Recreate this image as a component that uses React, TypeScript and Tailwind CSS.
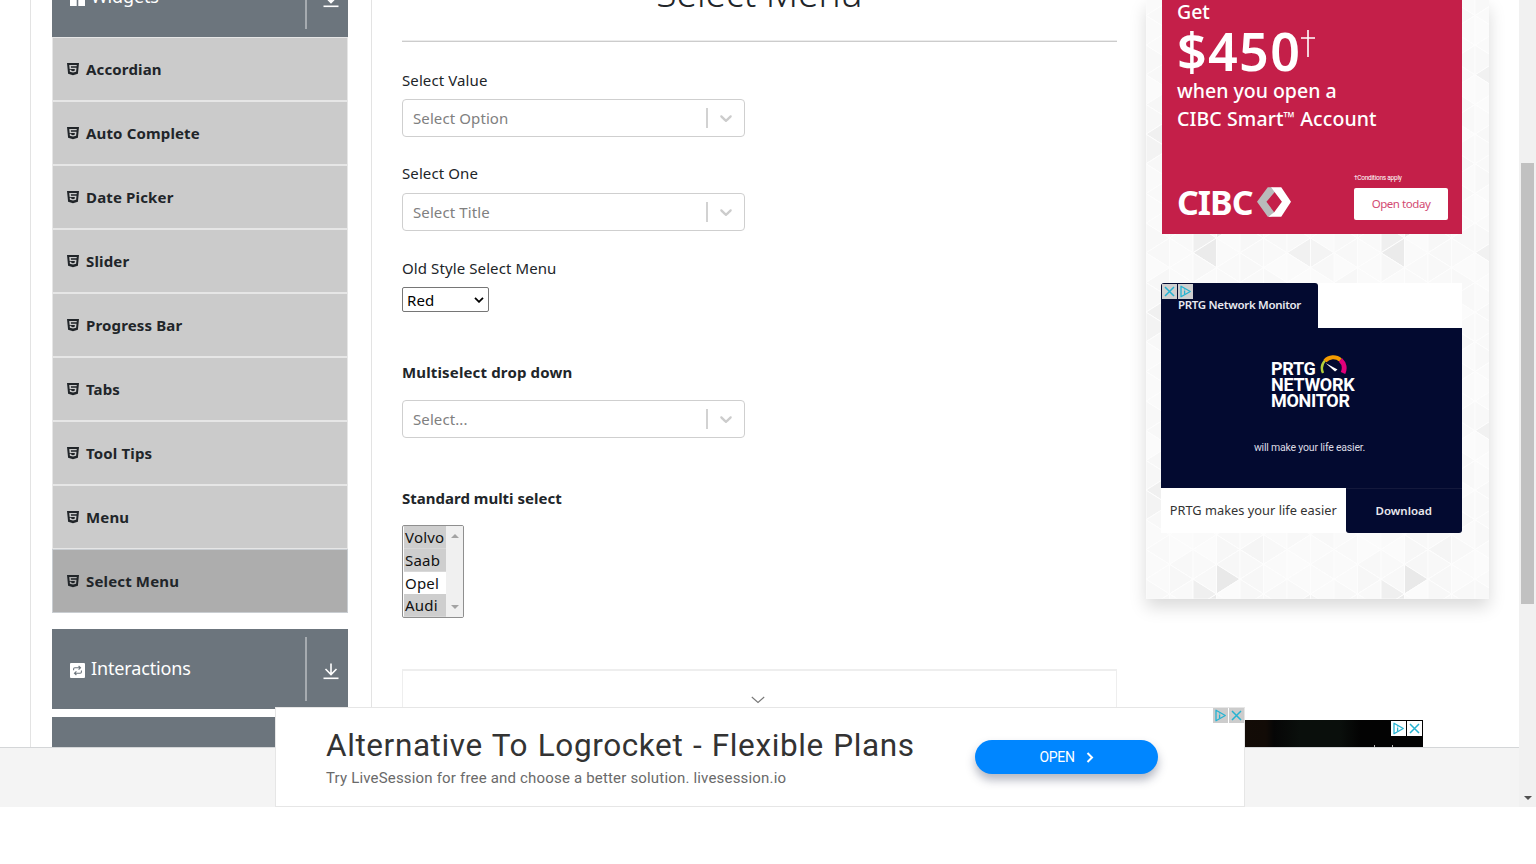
import { FaHtml5 } from "react-icons/fa";

const widgets = [
  "Accordian",
  "Auto Complete",
  "Date Picker",
  "Slider",
  "Progress Bar",
  "Tabs",
  "Tool Tips",
  "Menu",
  "Select Menu",
];

function DownloadIcon() {
  return (
    <svg width="16" height="17" viewBox="0 0 16 17" fill="none" stroke="#fff" strokeWidth="1.6">
      <path d="M8 0.5V11.5M2.5 6l5.5 5.5 5.5-5.5" />
      <path d="M0.5 15.3H15.5" />
    </svg>
  );
}

function GroupHeader({ label, icon }: { label: string; icon: React.ReactNode }) {
  return (
    <div className="flex h-20 w-[296px] shrink-0 bg-[#6c757d] text-white">
      <div className="flex flex-1 items-center gap-[6px] pl-[18px]">
        <span className="mt-[3px] flex">{icon}</span>
        <span className="-mt-[2px] text-[18px] leading-6 tracking-[-0.15px]">{label}</span>
      </div>
      <div className="my-2 w-[2px] bg-[#a6abb0]" />
      <div className="flex w-[41px] items-center justify-center pl-[7px] pt-[5px]">
        <DownloadIcon />
      </div>
    </div>
  );
}

function Sidebar() {
  return (
    <aside className="flex h-full w-[342px] shrink-0 flex-col border-x border-[#e3e3e3] pl-[21px]">
      <div className="-mt-[43px] flex flex-col">
        <GroupHeader
          label="Widgets"
          icon={
            <svg width="15" height="15" viewBox="0 0 15 15" fill="#fff">
              <path d="M0 0h6.7v6.7H0zM8.3 0H15v6.7H8.3zM0 8.3h6.7V15H0zM8.3 8.3H15V15H8.3z" />
            </svg>
          }
        />
        <ul className="w-[296px]">
          {widgets.map((name) => (
            <li
              key={name}
              className={
                name === "Select Menu"
                  ? "flex h-16 items-center gap-[7px] border border-[#c9cdd1] bg-[#adadad] pl-[14px]"
                  : "flex h-16 items-center gap-[7px] border border-[#e6e6e6] bg-[#cbcbcb] pl-[14px]"
              }
            >
              <FaHtml5 className="h-[14px] w-[12px] text-[#212529]" preserveAspectRatio="none" />
              <span className="text-[15px] font-bold leading-6 tracking-[0.15px] text-[#212529]">{name}</span>
            </li>
          ))}
        </ul>
        <div className="mt-4">
          <GroupHeader
            label="Interactions"
            icon={
              <svg width="15" height="15" viewBox="0 0 15 15" fill="none">
                <rect width="15" height="15" rx="1" fill="#fff" />
                <path d="M3.6 7.2V6q0-1.2 1.2-1.2h5M8.6 3l1.9 1.8-1.9 1.8M11.4 7.6V9q0 1.2-1.2 1.2h-5M6.4 8.4l-1.9 1.8 1.9 1.8" stroke="#6c757d" strokeWidth="1.1" />
              </svg>
            }
          />
        </div>
        <div className="mt-2 h-20 w-[296px] bg-[#6c757d]" />
      </div>
    </aside>
  );
}

function SelectBox({ placeholder }: { placeholder: string }) {
  return (
    <div className="flex h-[38px] w-[343px] items-center rounded-[4px] border border-[#cfcfcf] bg-white pl-[10px]">
      <span className="flex-1 text-[15px] leading-6 tracking-[0.1px] text-[#808080]">{placeholder}</span>
      <span className="h-5 w-[2px] bg-[#d2d2d2]" />
      <span className="flex w-[36px] items-center justify-center">
        <svg width="20" height="20" viewBox="0 0 20 20" fill="#cccccc">
          <path d="M4.516 7.548c0.436-0.446 1.043-0.481 1.576 0l3.908 3.747 3.908-3.747c0.533-0.481 1.141-0.446 1.574 0 0.436 0.445 0.408 1.197 0 1.615-0.406 0.418-4.695 4.502-4.695 4.502-0.217 0.223-0.502 0.335-0.787 0.335s-0.57-0.112-0.789-0.335c0 0-4.287-4.084-4.695-4.502s-0.436-1.17 0-1.615z" />
        </svg>
      </span>
    </div>
  );
}

const cars = [
  { name: "Volvo", on: true },
  { name: "Saab", on: true },
  { name: "Opel", on: false },
  { name: "Audi", on: true },
];

function Content() {
  return (
    <section className="ml-[30px] flex w-[715px] shrink-0 flex-col text-[15px] leading-6 tracking-[0.1px] text-[#212529]">
      <h1 className="-mt-[27px] h-10 shrink-0 text-center text-[37px] font-light leading-10 tracking-[0px]">Select Menu</h1>
      <div className="mt-[27px] h-[2px] shrink-0 border-b border-[#cccccc] bg-[#ececec]" />
      <div className="mt-[26px]">Select Value</div>
      <div className="mt-[7px]">
        <SelectBox placeholder="Select Option" />
      </div>
      <div className="mt-[24px]">Select One</div>
      <div className="mt-[8px]">
        <SelectBox placeholder="Select Title" />
      </div>
      <div className="mt-[25px]">Old Style Select Menu</div>
      <div className="mt-[7px] flex h-[25px] w-[87px] shrink-0 items-center justify-between rounded-[2px] border border-[#767676] bg-white pl-1 pr-[4px] text-black">
        <span className="pt-px">Red</span>
        <svg width="10" height="6" viewBox="0 0 10 6" fill="none" stroke="#000" strokeWidth="1.8">
          <path d="M1 0.8l4 4 4-4" />
        </svg>
      </div>
      <div className="mt-[48px] font-bold tracking-[0.15px]">Multiselect drop down</div>
      <div className="mt-[16px]">
        <SelectBox placeholder="Select..." />
      </div>
      <div className="mt-[48px] font-bold tracking-[0px]">Standard multi select</div>
      <div className="mt-[15px] flex h-[93px] w-[62px] shrink-0 overflow-hidden rounded-[2px] border border-[#8f8f8f] bg-white">
        <div className="flex w-[43px] shrink-0 flex-col pl-px">
          {cars.map((c) => (
            <span
              key={c.name}
              className={
                c.on
                  ? "h-[22.75px] shrink-0 border-b border-[#d8d8d8] bg-[#cecece] pl-px leading-[23px] tracking-[0.2px] text-[#101010]"
                  : "h-[22.75px] shrink-0 bg-white pl-px leading-[23px] tracking-[0.2px] text-[#101010]"
              }
            >
              {c.name}
            </span>
          ))}
        </div>
        <div className="flex flex-1 flex-col items-center justify-between bg-[#f0f0f0] py-2">
          <svg width="8" height="4" viewBox="0 0 8 4" fill="#a3a3a3">
            <path d="M0 4l4-4 4 4z" />
          </svg>
          <svg width="8" height="4" viewBox="0 0 8 4" fill="#a3a3a3">
            <path d="M0 0h8l-4 4z" />
          </svg>
        </div>
      </div>
      <div className="mt-[51px] flex h-[120px] shrink-0 justify-center border border-t-2 border-[#eeeeee] pt-[25px] pr-[3px]">
        <svg width="14" height="8" viewBox="0 0 14 8" fill="none" stroke="#777" strokeWidth="1.1">
          <path d="M0.8 1l6.2 5.5L13.2 1" />
        </svg>
      </div>
    </section>
  );
}

const COL = 23.5;
const ROW = 178 / 6;
const shades = ["#f8f8f8", "#fafafa", "#f8f8f8", "#fbfbfb", "#f9f9f9", "#fafafa", "#f7f7f7"];
const dark: Record<string, string> = {
  "2,0,R": "#efefef",
  "2,0,L": "#ebebeb",
  "3,5,R": "#e9e9e9",
  "6,0,L": "#f1f1f1",
  "7,0,R": "#f4f4f4",
  "0,3,R": "#f3f3f3",
  "4,4,L": "#f5f5f5",
  "0,2,L": "#f0f0f0",
};

function triangles() {
  const out: { key: string; d: string; fill: string }[] = [];
  for (let c = 0; c < 8; c++) {
    for (let r = -1; r < 7; r++) {
      const even = c % 2 === 0;
      const x0 = c * COL;
      const x1 = x0 + COL;
      const top = r * ROW;
      const left = even ? top - ROW / 2 : top;
      const right = even ? top : top + ROW / 2;
      const row = (r + 6) % 6;
      const pointRight = c + "," + row + ",R";
      const pointLeft = c + "," + row + ",L";
      out.push({
        key: pointRight + r,
        d: `M${x0} ${left}L${x0} ${left + ROW}L${x1} ${right}Z`,
        fill: dark[pointRight] ?? shades[(c * 5 + row * 3) % 7],
      });
      out.push({
        key: pointLeft + r,
        d: `M${x1} ${right}L${x1} ${right + ROW}L${x0} ${left + ROW}Z`,
        fill: dark[pointLeft] ?? shades[(c * 3 + row * 4 + 2) % 7],
      });
    }
  }
  return out;
}

function TrianglePattern() {
  return (
    <svg className="absolute inset-0 h-full w-full">
      <defs>
        <pattern id="tri" width="188" height="178" y="60" patternUnits="userSpaceOnUse">
          {triangles().map((t) => (
            <path key={t.key} d={t.d} fill={t.fill} stroke="#fdfdfd" strokeWidth="1" />
          ))}
        </pattern>
      </defs>
      <rect width="100%" height="100%" fill="url(#tri)" />
    </svg>
  );
}

function AdInfo() {
  return (
    <svg width="15" height="15" viewBox="0 0 15 15" fill="none" stroke="#25b3d2" strokeWidth="1.3">
      <path d="M3 2.2L12.3 7.5 3 12.8z" strokeLinejoin="round" />
      <path d="M6.6 6.6v3.6M6.6 4.6v1" />
    </svg>
  );
}

function AdClose() {
  return (
    <svg width="15" height="15" viewBox="0 0 15 15" fill="none" stroke="#25b3d2" strokeWidth="1.5">
      <path d="M3 3l9 9M12 3l-9 9" />
    </svg>
  );
}

function BankAd() {
  return (
    <div className="flex h-[233.5px] w-[300px] flex-col overflow-hidden bg-[#c41f49] pl-[15px] text-white">
      <div className="-mt-[2px] flex flex-col text-[19.5px] font-medium leading-7">
        <span className="h-[27px] leading-[27px]">Get</span>
        <span className="flex h-[52px] items-start">
          <span className="text-[52px] font-semibold leading-[52px] tracking-[1.3px]">$450</span>
          <svg className="mt-[5px]" width="14" height="28" viewBox="0 0 14 28" fill="none" stroke="#fff" strokeWidth="1.6">
            <path d="M7 0V27M0 8H14" />
          </svg>
        </span>
        <span>when you open a</span>
        <span className="flex tracking-[0.1px]">
          CIBC Smart<span className="text-[15px] leading-[25px] tracking-[-1px]">™</span>
          <span className="ml-[6px]">Account</span>
        </span>
      </div>
      <div className="mt-[41px] flex pr-[14px]">
        <div className="flex flex-1 items-center pt-[11px]">
          <span className="text-[34px] font-bold leading-[34px] tracking-[-1px]">CIBC</span>
          <svg className="ml-[4px]" width="34" height="30" viewBox="383 569 101 89">
            <path d="M383 613L415 570H428L437 582L411 613L434 644L425 657H415z" fill="#b9bbbb" />
            <path d="M425 570H455L484 613L455 657H417L434 644L457 613L434 582z" fill="#fff" />
          </svg>
        </div>
        <div className="flex w-[94px] flex-col">
          <span className="h-[13.5px] font-[Roboto] text-[6.5px] leading-[9px] tracking-[-0.25px]">†Conditions apply</span>
          <span className="flex h-[32px] items-center justify-center rounded-[2px] bg-white text-[11.5px] tracking-[-0.45px] text-[#d24a72]">
            Open today
          </span>
        </div>
      </div>
    </div>
  );
}

function PrtgAd() {
  return (
    <div className="relative -ml-px mt-[49.5px] flex h-[250px] w-[301px] flex-col bg-white">
      <div className="flex h-[45px] w-[157px] items-center justify-center rounded-t-[3px] bg-[#030a30] pb-[2px] text-[11.5px] font-semibold tracking-[-0.3px] text-[#e8e8ee]">
        PRTG Network Monitor
      </div>
      <div className="flex h-[160px] flex-col bg-[#030a30] text-white">
        <div className="ml-[110px] mt-[26px] flex flex-col font-[Roboto] text-[18px] font-bold leading-[15.7px] tracking-[-0.3px]">
          <span className="flex h-[23px] items-end">
            PRTG
            <svg className="ml-[3px]" width="28" height="23" viewBox="0 0 28 23" fill="none">
              <path d="M4 19A11.5 11.5 0 0 1 6 6.5" stroke="#b5cf3a" strokeWidth="2.4" />
              <path d="M6 7A11 11 0 0 1 21.5 6" stroke="#f59c00" strokeWidth="4" />
              <path d="M21.5 6A11 11 0 0 1 24 19" stroke="#e2007a" strokeWidth="5" />
              <path d="M6.5 9L18.5 15.5L16 17.4z" fill="#fff" />
            </svg>
          </span>
          <span>NETWORK</span>
          <span>MONITOR</span>
        </div>
        <span className="mt-[32px] pr-[4px] text-center font-[Roboto] text-[10.5px] leading-4 tracking-[-0.2px] text-[#dcdce4]">
          will make your life easier.
        </span>
      </div>
      <div className="flex h-[45px]">
        <span className="flex w-[184.5px] items-center justify-center text-[12.8px] tracking-[0.02px] text-[#333]">PRTG makes your life easier</span>
        <span className="flex flex-1 items-center justify-center rounded-b-[3px] border-t border-[#14193c] bg-[#030a30] pb-px text-[11.5px] font-semibold text-[#e8e8ee]">
          Download
        </span>
      </div>
      <div className="absolute left-px top-[1px] flex gap-[1px]">
        <span className="bg-[#cfcfcf]">
          <AdClose />
        </span>
        <span className="bg-[#cfcfcf]">
          <AdInfo />
        </span>
      </div>
    </div>
  );
}

function Ads() {
  return (
    <div className="relative ml-[29px] h-[598.5px] w-[343px] shrink-0 bg-[#fafafa] shadow-[0_8px_16px_rgba(0,0,0,0.15)]">
      <TrianglePattern />
      <div className="relative flex flex-col pl-4">
        <BankAd />
        <PrtgAd />
      </div>
    </div>
  );
}

function BottomBanner() {
  return (
    <div className="absolute left-[275px] top-[707px] flex h-[100px] w-[970px] border border-[#e6e6e6] bg-white font-[Roboto]">
      <div className="flex w-[699px] flex-col pl-[50px] pt-[18px]">
        <span className="whitespace-nowrap text-[31.5px] leading-[40px] tracking-[0.6px] text-[#333] [word-spacing:1.2px]">
          Alternative To Logrocket - Flexible Plans
        </span>
        <span className="mt-[2px] text-[15px] leading-5 tracking-[0.18px] text-[#6a6a6a]">
          Try LiveSession for free and choose a better solution. livesession.io
        </span>
      </div>
      <div className="mt-[32px] flex h-[34px] w-[183px] items-center justify-center gap-[11px] rounded-full bg-[#0086ff] text-[14px] tracking-[-0.3px] text-white shadow-[0_6px_10px_rgba(40,50,80,0.35)]">
        OPEN
        <svg width="8" height="11" viewBox="0 0 8 11" fill="none" stroke="#fff" strokeWidth="2">
          <path d="M1.5 1l4.5 4.5-4.5 4.5" />
        </svg>
      </div>
      <div className="absolute right-0 top-0 flex gap-px">
        <span className="bg-[#cccccc]">
          <AdInfo />
        </span>
        <span className="bg-[#cccccc]">
          <AdClose />
        </span>
      </div>
    </div>
  );
}

function VideoStrip() {
  return (
    <div className="absolute left-[1200px] top-[720px] flex h-[27px] w-[223px] justify-end gap-px overflow-hidden bg-[linear-gradient(90deg,#140c06_0,#120b06_66px,#060606_74px,#0a0f0c_100px,#0a0f0c_140px,#030303_160px)] pr-px pt-px">
      <span className="h-[15px] bg-white">
        <AdInfo />
      </span>
      <span className="h-[15px] bg-white">
        <AdClose />
      </span>
      <span className="absolute left-[174px] top-[25px] h-[2px] w-px bg-[#bbb]" />
      <span className="absolute left-[192px] top-[25px] h-[2px] w-px bg-[#bbb]" />
    </div>
  );
}

export default function App() {
  return (
    <div className="relative flex h-[864px] w-[1536px] flex-col overflow-hidden bg-white font-['Noto_Sans',sans-serif]">
      <div className="flex h-[807px]">
        <div className="flex w-[1519px] flex-col">
          <main className="flex h-[747px] overflow-hidden pl-[30px]">
            <Sidebar />
            <Content />
            <Ads />
          </main>
          <footer className="h-[60px] border-t border-[#d4d6d8] bg-[#f4f4f4]" />
        </div>
        <div className="flex w-[17px] flex-col items-center bg-[#f1f1f1]">
          <div className="mr-px mt-[163px] h-[441px] w-[13px] bg-[#c1c1c1]" />
          <svg className="mt-[192px]" width="8" height="4" viewBox="0 0 8 4" fill="#505050">
            <path d="M0 0h8l-4 4z" />
          </svg>
        </div>
      </div>
      <VideoStrip />
      <BottomBanner />
    </div>
  );
}
